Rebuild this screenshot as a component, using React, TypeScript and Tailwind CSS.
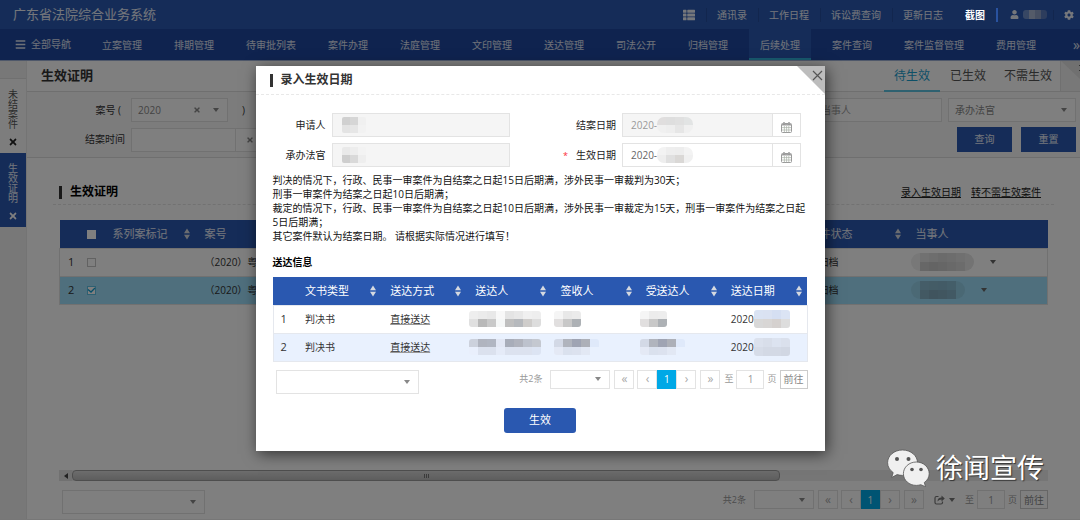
import { useId, type ReactNode } from "react";
import { clsx } from "clsx";
import { FaBars, FaCog, FaThList, FaTimes, FaUser } from "react-icons/fa";

const topLinks = ["通讯录", "工作日程", "诉讼费查询", "更新日志"];
const navItems = [
  "立案管理", "排期管理", "待审批列表", "案件办理", "法庭管理", "文印管理", "送达管理",
  "司法公开", "归档管理", "后续处理", "案件查询", "案件监督管理", "费用管理",
];

function Caret({ className }: { className?: string }) {
  return (
    <svg viewBox="0 0 6 4" className={clsx("h-1 w-1.5", className)} fill="currentColor" aria-hidden="true">
      <path d="M0 0h6L3 4z" />
    </svg>
  );
}

function SortIcon() {
  return (
    <svg viewBox="0 0 6 12" className="h-3 w-1.5 shrink-0" fill="#d5d9e0" aria-hidden="true">
      <path d="M3 0.5 6 5.3H0zM3 11.5 0 6.7h6z" />
    </svg>
  );
}

function CalendarIcon() {
  return (
    <svg viewBox="0 0 11 11" className="h-[11px] w-[11px]" aria-hidden="true">
      <rect x="0.5" y="1.5" width="10" height="9" rx="1" fill="#fff" stroke="#9a9a9a" />
      <path d="M1 2.800h9" stroke="#9a9a9a" strokeWidth="1.4" />
      <path d="M1 5.6h9M1 8h9M3.4 4v6.4M5.6 4v6.4M7.8 4v6.4" stroke="#a9b0a6" strokeWidth="0.7" />
      <path d="M3 0v3M8 0v3" stroke="#888" strokeWidth="1.3" />
      <path d="M3 0.6v1.8M8 0.6v1.8" stroke="#ddd" strokeWidth="0.5" />
    </svg>
  );
}

function Mosaic({ rows, cell = 9, rowHeight = 9, radius = 3 }: {
  rows: string[][];
  cell?: number;
  rowHeight?: number;
  radius?: number;
}) {
  const id = useId();
  const width = rows[0].length * cell;
  const height = rows.length * rowHeight;
  return (
    <svg width={width} height={height} aria-hidden="true" className="shrink-0">
      <clipPath id={id}>
        <rect width={width} height={height} rx={radius} />
      </clipPath>
      <g clipPath={`url(#${id})`} shapeRendering="crispEdges">
        {rows.map((row, y) =>
          row.map((fill, x) => (
            <rect key={`${x}-${y}`} x={x * cell} y={y * rowHeight} width={cell} height={rowHeight} fill={fill} />
          )),
        )}
      </g>
    </svg>
  );
}

function Select({ label, value = "", className, children }: {
  label: string;
  value?: string;
  className?: string;
  children?: ReactNode;
}) {
  return (
    <div className={clsx("relative border border-[#e3e3e3] bg-white text-[#888]", className)}>
      <select aria-label={label} className="block h-full w-full appearance-none bg-transparent px-1.5 outline-none">
        <option>{value}</option>
      </select>
      <div className="pointer-events-none absolute inset-y-0 right-2 flex items-center gap-3">
        {children}
        <Caret />
      </div>
    </div>
  );
}

function Pager({ share = false }: { share?: boolean }) {
  const box = "flex h-[19px] items-center justify-center border border-[#e3e3e3] bg-white text-[#aaa]";
  return (
    <nav aria-label="分页" className="flex items-center text-[9px] leading-[18px] text-[#999]">
      <span className="mr-2">共2条</span>
      <Select label="每页条数" className="mr-1 h-[19px] w-[60px]" />
      <button aria-label="首页" className={clsx(box, "mr-[3px] w-5 text-[12px]")}>«</button>
      <button aria-label="上一页" className={clsx(box, "w-5 text-[12px]")}>‹</button>
      <button className="h-[19px] w-[19px] bg-[#00a8e6] text-[10px] text-white">1</button>
      <button aria-label="下一页" className={clsx(box, "mr-1 w-5 text-[12px]")}>›</button>
      <button aria-label="末页" className={clsx(box, "w-5 text-[12px]")}>»</button>
      {share && (
        <button aria-label="导出" className="mr-1.5 ml-2.5 flex items-center gap-1 text-[#777]">
          <svg viewBox="0 0 11 10" className="h-2.5 w-[11px]" fill="none" stroke="currentColor" aria-hidden="true">
            <path d="M4.5 1.5h-2q-1.500 0-1.500 1.500v4.500q0 1.500 1.500 1.500h4.500q1.500 0 1.500-1.500v-1" strokeWidth="1.200" />
            <path d="M3.500 6.500q0-4 4-4V.6l3.300 3-3.300 3V4.600q-2.500 0-4 1.900z" fill="currentColor" stroke="none" />
          </svg>
          <Caret />
        </button>
      )}
      <label className="ml-1 flex items-center gap-[3px]">
        至
        <input defaultValue="1" aria-label="页码" className="h-[19px] w-7 border border-[#e3e3e3] bg-white text-center text-[10px] outline-none" />
      </label>
      <span className="mx-[3px]">页</span>
      <button className="h-[19px] w-7 border border-[#ccc] text-[10px] leading-none text-[#888]">前往</button>
    </nav>
  );
}

function TopBar() {
  return (
    <header className="flex h-[29px] items-center justify-between bg-[#2a58b0] pl-[13px] text-white/90">
      <h1 className="text-[13px] whitespace-nowrap">广东省法院综合业务系统</h1>
      <div className="flex items-center text-[10px] leading-[14px] whitespace-nowrap">
        <button aria-label="列表" className="px-[11px] text-[12px]"><FaThList /></button>
        {topLinks.map((t) => (
          <a key={t} href="#" className="border-l border-[#244c9c] pr-[11px] pl-2.5">{t}</a>
        ))}
        <a href="#" className="relative z-20 border-l border-transparent pr-[11px] pl-2.5 font-bold text-white">截图</a>
        <span className="relative z-20 mr-3 h-3.5 w-0.5 bg-[#29529f]" />
        <a href="#" aria-label="用户" className="flex items-center gap-1 pr-1.5">
          <FaUser className="text-[9px]" />
          <Mosaic rows={[["#6f8fc9", "#a9b7d2", "#8c9fc5", "#5a7abb"]]} cell={6} rowHeight={9} />
        </a>
        <button aria-label="设置" className="border-l border-[#244c9c] pr-1.5 pl-2.5 text-[10px]"><FaCog /></button>
      </div>
    </header>
  );
}

function MainNav() {
  return (
    <nav className="flex h-8 items-stretch overflow-hidden border-b border-[#9fb0d5] bg-[#1e479f] text-[10px] whitespace-nowrap text-white/85">
      <button className="mr-5 flex shrink-0 items-center gap-[5px] pl-[15px]"><FaBars className="text-[11px]" />全部导航</button>
      <div className="flex flex-1 gap-2.5">
        {navItems.map((t) => (
          <a
            key={t}
            href="#"
            className={clsx(
              "flex shrink-0 items-center border-b-2 px-[11px] pt-[3px]",
              t === "后续处理" ? "border-[#30b2dc] bg-[#2a58b0]" : "border-transparent",
            )}
          >
            {t}
          </a>
        ))}
      </div>
      <button aria-label="更多" className="text-[14px]">»</button>
    </nav>
  );
}

function SideTabs() {
  return (
    <aside className="w-[27px] shrink-0 border-r border-[#e8e8e8] bg-[#f1f1f1] pt-[17px] text-[10px] leading-[10px]">
      {["未结案件", "生效证明"].map((t, i) => (
        <div
          key={t}
          className={clsx(
            "flex flex-col items-center gap-2 pt-2.5 pb-1.5",
            i === 0 ? "border-t border-[#e0e0e0] bg-[#fbfbfb] text-[#555]" : "bg-[#2a58b0] text-white/90",
          )}
        >
          <a href="#" className="w-[10px] break-all">{t}</a>
          <button aria-label={`关闭${t}`} className={i === 0 ? "text-[#222]" : "text-white"}><FaTimes /></button>
        </div>
      ))}
    </aside>
  );
}

function Filters() {
  const button = "h-[25px] w-[55px] bg-[#2a58b0] text-white/90";
  return (
    <form className="flex flex-col gap-[5px] border-b border-[#dedede] bg-[#f9f9f9] pt-1.5 pr-1 pb-[5px] text-[10px] text-[#333]">
      <div className="flex h-6 items-center">
        <span className="w-[98px] pr-1 text-right">案号 (</span>
        <Select label="案号年份" value="2020" className="ml-1.5 h-6 w-[97px]">
          <FaTimes className="text-[8px]" />
        </Select>
        <span className="ml-3.5">)</span>
        <input aria-label="当事人" placeholder="当事人" className="ml-auto h-6 w-32 border border-[#e3e3e3] bg-white px-1.5 outline-none placeholder:text-[#999]" />
        <Select label="承办法官" value="承办法官" className="ml-1.5 h-6 w-32" />
      </div>
      <div className="flex items-center">
        <label htmlFor="closeTime" className="w-[98px] text-right">结案时间</label>
        <div className="ml-1.5 flex h-6 border border-[#e3e3e3] bg-white">
          <input id="closeTime" className="w-[103px] outline-none" />
          <button type="button" aria-label="清除" className="flex w-7 items-center justify-center border-l border-[#e3e3e3] text-[8px] text-[#888]"><FaTimes /></button>
        </div>
        <div className="ml-auto flex gap-[9px]">
          <button type="button" className={button}>查询</button>
          <button type="button" className={button}>重置</button>
        </div>
      </div>
    </form>
  );
}

const caseRows = [
  { n: 1, checked: false, cells: [["#f0f0f0", "#e2e2e2", "#dcdcdc", "#d6d6d6", "#dadada", "#e0e0e0", "#e6e6e6"], ["#f0f0f0", "#cfcfcf", "#c9c9c9", "#cccccc", "#d2d2d2", "#d8d8d8", "#e6e6e6"]] },
  { n: 2, checked: true, cells: [["#97d3ea", "#8abbd0", "#88b8cc", "#86b6cc", "#88bcd2", "#94d0e8"], ["#97d3ea", "#86b2c6", "#80a9bc", "#82adc0", "#84b2c8", "#94d0e8"]] },
];

function CaseTable() {
  return (
    <table className="w-full table-fixed border-collapse text-left text-[10px] text-[#333]">
      <colgroup>
        <col className="w-[22px]" /><col className="w-[19px]" /><col className="w-[95px]" />
        <col /><col className="w-[107px]" /><col className="w-[141px]" />
      </colgroup>
      <thead>
        <tr className="h-7 bg-[#2a58b0] text-[11px] text-white/90">
          <th />
          <th className="align-middle">
            <input type="checkbox" aria-label="全选" className="mx-auto mt-0.5 block h-[9px] w-[9px] appearance-none bg-white" />
          </th>
          <th className="pl-3 font-normal"><div className="flex items-center justify-between pr-1.5">系列案标记<SortIcon /></div></th>
          <th className="pl-[9px] font-normal">案号</th>
          <th className="pl-[9px] font-normal"><div className="flex items-center justify-between pr-1.5">案件状态<SortIcon /></div></th>
          <th className="pl-[9px] font-normal">当事人</th>
        </tr>
      </thead>
      <tbody>
        {caseRows.map((r) => (
          <tr key={r.n} className={clsx("h-7 border border-[#e3e3e3]", r.checked && "bg-[#9edefa]")}>
            <td className="pl-2 text-[11px]">{r.n}</td>
            <td>
              <span className="relative mx-auto block h-[9px] w-[9px]">
                <input type="checkbox" defaultChecked={r.checked} aria-label={`选择第${r.n}行`} className="block h-[9px] w-[9px] appearance-none border border-[#c4c4c4] bg-white checked:border-[#5cc0e4]" />
                {r.checked && (
                  <svg viewBox="0 0 9 9" className="pointer-events-none absolute inset-0" fill="none" stroke="#0d9ed2" strokeWidth="1.3" aria-hidden="true">
                    <path d="M1 3.500 4 6 8 2" />
                  </svg>
                )}
              </span>
            </td>
            <td />
            <td className="pl-[9px] whitespace-nowrap">（2020）粤</td>
            <td className="pl-[9px]">已归档</td>
            <td>
              <div className={clsx("flex items-center pl-1 text-[#666]", r.checked ? "gap-4" : "gap-4")}>
                <Mosaic rows={r.cells} cell={9} rowHeight={9} radius={9} />
                <Caret />
              </div>
            </td>
          </tr>
        ))}
      </tbody>
    </table>
  );
}

function Scrollbar() {
  return (
    <div className="flex h-[11px] items-stretch bg-[#ececec]">
      <span className="flex w-[13px] items-center justify-center bg-[#e2e2e2] text-[#444]"><Caret className="rotate-90" /></span>
      <span className="flex w-[708px] items-center justify-center gap-px rounded-sm border border-[#9d9d9d] bg-linear-to-b from-[#dadada] to-[#bbbbbb]">
        {[0, 1, 2].map((n) => <i key={n} className="h-1 w-px bg-[#777]" />)}
      </span>
    </div>
  );
}

function Page() {
  return (
    <main className="flex min-w-0 flex-1 flex-col">
      <div className="flex h-[31px] items-stretch border-b border-[#dedede] pl-3.5">
        <h2 className="self-center text-[13px] font-bold text-[#333]">生效证明</h2>
        <div className="ml-auto flex text-[12px] text-[#555]">
          <a href="#" className="-mb-px flex items-center border-b-2 border-[#5cc3e0] px-2.5 text-[#1aa0cf]">待生效</a>
          <a href="#" className="flex items-center px-2.5">已生效</a>
          <a href="#" className="flex items-center px-2">不需生效</a>
        </div>
        <div className="w-5 overflow-hidden border-l border-[#e0e0e0] bg-[#f1f1f1]">
          <svg viewBox="0 0 20 30" className="h-[30px] w-5" aria-hidden="true">
            <path d="M0 0h20v19z" fill="#e0e0e0" />
            <path d="m18 4 6 6m-6 0 6-6" stroke="#666" />
          </svg>
        </div>
      </div>
      <Filters />
      <section className="flex flex-1 flex-col px-[26px] pt-[22px]">
        <div className="flex h-[25px] items-center border-b border-dashed border-[#e4e4e4] pl-1.5">
          <span className="mr-2 h-[13px] w-[3px] bg-[#333]" />
          <h3 className="text-[12px] font-bold text-black">生效证明</h3>
          <div className="mr-[13px] ml-auto flex gap-2.5 text-[10px] text-[#222] underline">
            <a href="#">录入生效日期</a>
            <a href="#">转不需生效案件</a>
          </div>
        </div>
        <div className="mt-[15px] flex flex-1 flex-col pr-1.5 pl-1.5">
          <CaseTable />
          <div className="mt-auto"><Scrollbar /></div>
          <div className="mt-[9px] flex items-start justify-between pb-[5px] pl-[3px]">
            <Select label="操作" className="h-6 w-[143px]" />
            <Pager share />
          </div>
        </div>
      </section>
    </main>
  );
}

type Grid = string[][];
const dialogRows: { n: number; who: Grid; sign: Grid; recv: Grid; date: Grid }[] = [
  {
    n: 1,
    who: [["#eeeeee", "#ebebeb", "#e8e8e8", "#f8f8f8", "#e4e4e4", "#e8e8e8", "#f0f0f0", "#eeeeee"], ["#e0e0e0", "#b9b9b9", "#c9c9c9", "#f5f7f7", "#bfbfbf", "#b6b9bd", "#cfcdcb", "#dddddd"]],
    sign: [["#f5f5f5", "#e8e8e8", "#ebebeb"], ["#e1dfdf", "#c8c8c8", "#adb1b5"]],
    recv: [["#f5f5f5", "#ececec", "#ededed"], ["#e1dfdf", "#c8c8c8", "#adb1b5"]],
    date: [["#dae3f3", "#dae2f2", "#d5dff2", "#dbe4f4"], ["#d8d8d8", "#d8d6d5", "#d5d1cf", "#dddddd"]],
  },
  {
    n: 2,
    who: [["#ccd1dc", "#b0b4bf", "#b1b6c2", "#e2e7f4", "#a8adb9", "#b0b3bd", "#bdc2cd", "#c4c8d0"], ["#e9effc", "#dbe1ee", "#dbe1ee", "#e5ebf8", "#dce2ef", "#dce2ef", "#dce2ef", "#dce4f3"]],
    sign: [["#d3d9e6", "#b0b4bd", "#9fa4b3", "#adb0b8", "#dfe9fa"], ["#e4e9f5", "#dae1ee", "#dce2ef", "#e2e8f4", "#e9f1fe"]],
    recv: [["#d3d9e6", "#b0b4bd", "#9fa4b3", "#adb0b8", "#dfe9fa"], ["#e4e9f5", "#dae1ee", "#dce2ef", "#e2e8f4", "#e9f1fe"]],
    date: [["#dbe1ed", "#d8deea", "#dce3f0", "#dae0ec"], ["#d6dce8", "#d3d9e5", "#d3d9e5", "#d1d7e3"]],
  },
];

function MaskedField({ id, label, value = "", date, disabled, required, mask }: {
  id: string;
  label: string;
  value?: string;
  date?: boolean;
  disabled?: boolean;
  required?: boolean;
  mask: Grid;
}) {
  return (
    <>
      <label htmlFor={id} className="text-right text-[#222]">
        {required && <span className="mr-2 text-[9px] text-red-500">*</span>}
        {label}
      </label>
      <div className={clsx("relative flex h-6 border border-[#e3e3e3]", disabled ? "bg-[#f5f5f5]" : "bg-white")}>
        <input
          id={id}
          readOnly={disabled}
          defaultValue={value}
          className={clsx("min-w-0 flex-1 bg-transparent px-2 outline-none", disabled ? "text-[#999]" : "text-[#666]")}
        />
        <span className={clsx("pointer-events-none absolute inset-y-0 flex items-center", date ? "left-[34px]" : "left-[9px]")}>
          <Mosaic rows={mask} cell={date ? 9 : 8} rowHeight={8} radius={date ? 7 : 2} />
        </span>
        {date && (
          <button type="button" aria-label={`选择${label}`} className="flex w-7 items-center justify-center border-l border-[#e3e3e3] bg-white pt-1">
            <CalendarIcon />
          </button>
        )}
      </div>
    </>
  );
}

function Dialog() {
  const name: Grid = [["#d0d0d0", "#d6d6d6", "#f0f0f0"], ["#e3e3e3", "#e6e6e6", "#f2f2f2"]];
  const judge: Grid = [["#e9e9e9", "#ededed", "#f3f3f3"], ["#cecece", "#d9d9d9", "#eeeeee"]];
  const d1: Grid = [["#e0dede", "#dedede", "#e0e0e0", "#e2e4e4"], ["#f0f0f0", "#eeeeee", "#e6e6e6", "#f0f0f0"]];
  const d2: Grid = [["#f3f3f3", "#eeeeee", "#ededed", "#f3f3f3"], ["#eeeeee", "#e0e0e0", "#dad8d6", "#f0f0f0"]];
  return (
    <div role="dialog" aria-label="录入生效日期" className="w-[569px] bg-white text-[10px] text-[#333] shadow-[2px_3px_14px_rgba(0,0,0,0.6)]">
      <div className="relative flex h-[29px] items-center border-b border-dashed border-[#e8e8e8] pl-3.5">
        <span className="mr-2 h-[13px] w-[3px] bg-[#333]" />
        <h2 className="text-[12px] font-bold">录入生效日期</h2>
        <button aria-label="关闭" className="absolute top-0 right-0">
          <svg viewBox="0 0 28 28" className="h-7 w-7" aria-hidden="true">
            <path d="M0 0h28v28z" fill="#bdbdbd" />
            <path d="m16 5 9 9m-9 0 9-9" stroke="#555" strokeWidth="1.200" />
          </svg>
        </button>
      </div>
      <div className="px-[17px] pt-[18px] pb-[18px]">
        <form className="mr-[7px] grid grid-cols-[53px_1fr_100px_1fr] items-center gap-1.5">
          <MaskedField id="applicant" label="申请人" disabled mask={name} />
          <MaskedField id="closeDate" label="结案日期" value="2020-" date disabled mask={d1} />
          <MaskedField id="judge" label="承办法官" disabled mask={judge} />
          <MaskedField id="effectDate" label="生效日期" value="2020-" date required mask={d2} />
        </form>
        <p className="mt-1.5 leading-[14px] whitespace-nowrap text-[#111]">
          判决的情况下，行政、民事一审案件为自结案之日起15日后期满，涉外民事一审裁判为30天；<br />
          刑事一审案件为结案之日起10日后期满；<br />
          裁定的情况下，行政、民事一审案件为自结案之日起10日后期满，涉外民事一审裁定为15天，刑事一审案件为结案之日起<br />
          5日后期满；<br />
          其它案件默认为结案日期。 请根据实际情况进行填写！
        </p>
        <h3 className="mt-3 leading-[14px] font-bold text-black">送达信息</h3>
        <table className="mt-2 w-full table-fixed border-collapse text-left">
          <colgroup><col className="w-[23px]" /></colgroup>
          <thead>
            <tr className="h-7 bg-[#2a58b0] text-[11px] text-white">
              <th className="w-[23px]" />
              {["文书类型", "送达方式", "送达人", "签收人", "受送达人", "送达日期"].map((t) => (
                <th key={t} className="pl-[9px] font-normal whitespace-nowrap">
                  <div className="flex items-center justify-between pr-[5px]">{t}<SortIcon /></div>
                </th>
              ))}
            </tr>
          </thead>
          <tbody>
            {dialogRows.map((r) => (
              <tr key={r.n} className={clsx("h-7 border border-[#e5e8ee]", r.n === 2 && "bg-[#e9f1fe]")}>
                <td className="pl-[7px] text-[11px]">{r.n}</td>
                <td className="pl-[9px]">判决书</td>
                <td className="pl-[9px]"><a href="#" className="underline decoration-[#999]">直接送达</a></td>
                <td className="pl-[3px]"><Mosaic rows={r.who} rowHeight={8} /></td>
                <td className="pl-[3px]"><Mosaic rows={r.sign} rowHeight={8} /></td>
                <td className="pl-[3px]"><Mosaic rows={r.recv} rowHeight={8} /></td>
                <td className="pl-[9px]"><div className="flex items-center">2020<Mosaic rows={r.date} /></div></td>
              </tr>
            ))}
          </tbody>
        </table>
        <div className="mt-2 flex items-start justify-between pl-[3px]">
          <Select label="操作" className="h-6 w-[143px]" />
          <Pager />
        </div>
        <button className="mx-auto mt-3.5 block h-[25px] w-[72px] rounded-[3px] bg-[#2a58b0] text-[11px] text-white">生效</button>
      </div>
    </div>
  );
}

function Watermark() {
  return (
    <div className="pointer-events-none absolute right-9 bottom-8 z-30 flex items-center gap-1.5 text-white">
      <svg viewBox="0 0 43 38" className="h-[38px] w-[43px]" aria-hidden="true">
        <g fill="#f0f0f0" stroke="#555" strokeWidth="0.8">
          <path d="M15.500 1C7.200 1 .6 6.600.6 13.700c0 4 2.200 7.500 5.600 9.900L4.700 28.500l5.400-2.900c1.700.5 3.500.8 5.400.8 8.300 0 15-5.700 15-12.700S23.800 1 15.500 1z" />
          <path d="M29.300 13c-7.200 0-12.900 5.200-12.900 11.700s5.700 11.700 12.900 11.700c1.600 0 3.100-.3 4.500-.7l4.700 2-1.200-4.200c3-2.100 4.900-5.300 4.900-8.800 0-6.500-5.700-11.700-12.900-11.700z" />
        </g>
        <g fill="#555">
          <circle cx="10" cy="10" r="2" /><circle cx="21.500" cy="10" r="2" />
          <circle cx="25" cy="20.500" r="1.800" /><circle cx="34" cy="20.500" r="1.800" />
        </g>
      </svg>
      <span className="text-[27px] leading-[38px] text-shadow-[1px_1px_1px_#333]">徐闻宣传</span>
    </div>
  );
}

export default function App() {
  return (
    <div lang="zh-CN" className="relative flex min-h-screen flex-col overflow-hidden border-b border-[#777] bg-white font-['Open_Sans','Noto_Sans_CJK_SC',sans-serif]">
      <TopBar />
      <MainNav />
      <div className="flex flex-1">
        <SideTabs />
        <Page />
      </div>
      <div className="absolute inset-0 z-10 flex items-center justify-center bg-black/50 pb-0.5">
        <Dialog />
      </div>
      <Watermark />
    </div>
  );
}
